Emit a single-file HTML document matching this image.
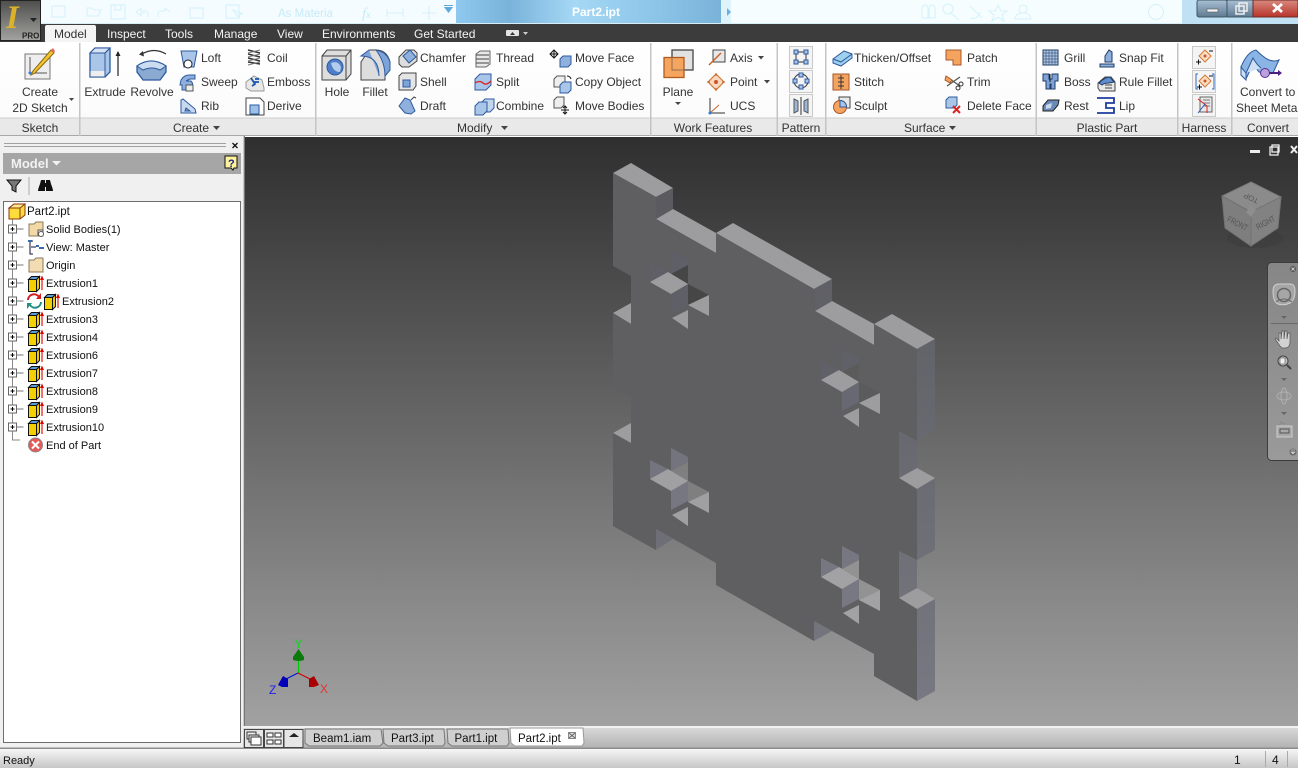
<!DOCTYPE html>
<html><head><meta charset="utf-8"><title>Part2.ipt</title>
<style>
html,body{margin:0;padding:0;background:#fff;overflow:hidden}
svg{display:block}
text{font-family:"Liberation Sans",sans-serif;font-size:12px;fill:#333}
.tab{fill:#f4f4f4}
.mid{text-anchor:middle}
.t{fill:#111}
.tr{fill:#111;font-size:11px}
.dt{fill:#111;font-size:11.5px}
.o{fill:#f4a45f;stroke:#a8562a;stroke-width:1}
.q{fill:none;stroke:#d6f2fb;stroke-width:1.1}
</style></head><body>
<svg width="1298" height="768" viewBox="0 0 1298 768" xmlns="http://www.w3.org/2000/svg">
<defs>
<linearGradient id="bg" gradientUnits="userSpaceOnUse" x1="0" y1="138" x2="0" y2="725"><stop offset="0" stop-color="#2f2f2f"/><stop offset="1" stop-color="#a1a1a1"/></linearGradient>
<linearGradient id="side" gradientUnits="userSpaceOnUse" x1="0" y1="200" x2="0" y2="700"><stop offset="0" stop-color="#5a5a60"/><stop offset="1" stop-color="#787882"/></linearGradient>
<linearGradient id="tb" x1="0" y1="0" x2="1" y2="0"><stop offset="0" stop-color="#8fc9ee"/><stop offset=".2" stop-color="#79b3da"/><stop offset=".45" stop-color="#a5d8f5"/><stop offset=".75" stop-color="#8cc5e8"/><stop offset="1" stop-color="#79b2d8"/></linearGradient>
<linearGradient id="app" x1="0" y1="0" x2="0" y2="1"><stop offset="0" stop-color="#4e4e4c"/><stop offset="1" stop-color="#a3a3a0"/></linearGradient>
<linearGradient id="st" x1="0" y1="0" x2="0" y2="1"><stop offset="0" stop-color="#f6f6f6"/><stop offset="1" stop-color="#c6c6c6"/></linearGradient>
<linearGradient id="tbar" x1="0" y1="0" x2="0" y2="1"><stop offset="0" stop-color="#d8d8d8"/><stop offset="1" stop-color="#b2b2b2"/></linearGradient>
<linearGradient id="rib" x1="0" y1="0" x2="0" y2="1"><stop offset="0" stop-color="#fff"/><stop offset="1" stop-color="#fbfbfb"/></linearGradient>
<linearGradient id="red" x1="0" y1="0" x2="0" y2="1"><stop offset="0" stop-color="#d88a80"/><stop offset="1" stop-color="#b8352a"/></linearGradient>
<linearGradient id="ctl" x1="0" y1="0" x2="0" y2="1"><stop offset="0" stop-color="#a8c0d4"/><stop offset="1" stop-color="#5f7a90"/></linearGradient>
<linearGradient id="nav" x1="0" y1="0" x2="0" y2="1"><stop offset="0" stop-color="#868686"/><stop offset="1" stop-color="#9a9a9a"/></linearGradient>
<g id="ext">
<rect x=".5" y="4.500" width="8" height="12" fill="#f5d000" stroke="#111"/>
<path d="M8.500 4.500L11.500 1.500V13.500L8.500 16.500Z" fill="#f2c800" stroke="#111"/>
<path d="M.5 4.500L3.500 1.500H11.500L8.500 4.500Z" fill="#5d9bd5" stroke="#111"/>
<path d="M14 15V3" stroke="#d00" stroke-width="1.100"/>
<path d="M12 5L14 0.500L16 5Z" fill="#d00"/>
</g>
<g id="pm"><rect x="-4" y="-4" width="8" height="8" fill="#fff" stroke="#666"/><path d="M-2 0H2M0 -2V2" stroke="#000"/><path d="M4 0H11" stroke="#777"/></g>
<path id="drop" d="M0 0H7L3.5 4Z" fill="#444"/>
</defs>

<!-- title bar -->
<rect width="1298" height="24" fill="#f6fdff"/>
<rect x="0" y="0" width="456" height="24" fill="#f4fcff"/>
<rect x="456" y="0" width="265" height="24" fill="url(#tb)"/>
<rect x="721" y="0" width="10" height="24" fill="#def3fc"/>
<rect x="1182" y="0" width="116" height="24" fill="#bfe1f3"/>
<rect x="1197" y="0" width="30" height="17" rx="2" fill="url(#ctl)" stroke="#3f5566"/>
<rect x="1227" y="0" width="26" height="17" fill="url(#ctl)" stroke="#3f5566"/>
<rect x="1253" y="0" width="45" height="17" fill="url(#red)" stroke="#6e2a22"/>
<rect x="1207" y="9" width="11" height="3" fill="#f4f4f4" stroke="#555" stroke-width=".6"/>
<rect x="1236" y="6" width="8" height="8" fill="none" stroke="#eee" stroke-width="1.5"/><rect x="1239" y="3" width="8" height="8" fill="none" stroke="#eee" stroke-width="1.5"/>
<path d="M1273 4l9 8M1282 4l-9 8" stroke="#fff" stroke-width="2.800"/>
<text x="596" y="16" class="mid" style="fill:#fff;font-weight:bold">Part2.ipt</text>
<!-- faint QAT -->
<g class="q">
<rect x="52" y="6" width="13" height="11"/><path d="M87 16V8h5l2 2h7l-3 6z"/><rect x="111" y="5" width="14" height="14"/><rect x="115" y="5" width="6" height="5"/>
<path d="M136 12l5-4v3h5q3 1 2 6M136 12l5 4v-3h4"/><path d="M170 12l-5-4v3h-5q-3 1-2 6"/><rect x="190" y="8" width="13" height="10"/><rect x="226" y="5" width="13" height="13"/><path d="M233 10l6 8 1-4 3 0z"/>
<path d="M387 13h16M387 9v8M403 9v8M422 13h14M429 6v14"/>
<path d="M922 18v-9q0-4 3-4t3 4v9h-6M929 18v-9q0-4 3-4t3 4v9h-6"/><circle cx="948" cy="9" r="5"/><path d="M951 13l8 7"/><path d="M970 6l12 12M970 18q8 2 10-6"/><path d="M998 5l3 6h6l-5 4 2 6-6-4-6 4 2-6-5-4h6z"/><circle cx="1023" cy="9" r="4"/><path d="M1015 19q1-6 8-6t8 6z"/><circle cx="1156" cy="12" r="7.5"/>
</g>
<text x="278" y="17" style="font-size:11.5px;fill:#c6ebf8">As Materia</text>
<text x="362" y="18" style="font-family:'Liberation Serif',serif;font-style:italic;font-size:15px;fill:#c6ebf8">f<tspan style="font-size:10px;fill:#c6ebf8">x</tspan></text>
<path d="M444 7h9l-4.500 6z" fill="#5fa8d8"/><rect x="444" y="5" width="9" height="1" fill="#5fa8d8"/>
<path d="M727 8l4 4-4 4z" fill="#6ab0dc"/>

<!-- tab bar -->
<rect y="24" width="1298" height="18" fill="#3c3c3c"/>
<rect y="23" width="1182" height="1" fill="#d8eef7"/>
<path d="M45 42V27q0-2 2-2H94q2 0 2 2V42Z" fill="#f4f4f4"/>
<text x="54" y="38" style="fill:#333">Model</text>
<text x="107" y="38" class="tab">Inspect</text><text x="165" y="38" class="tab">Tools</text><text x="214" y="38" class="tab">Manage</text><text x="277" y="38" class="tab">View</text><text x="322" y="38" class="tab">Environments</text><text x="414" y="38" class="tab">Get Started</text>
<rect x="506" y="30" width="13" height="6" rx="1" fill="#e4e4e4"/><path d="M510 35l2.500-3 2.500 3z" fill="#333"/><path d="M523 32h5l-2.500 3z" fill="#ccc"/>

<!-- app button -->
<rect x=".5" y=".5" width="40" height="40" fill="url(#app)" stroke="#222"/>
<text x="6" y="28" style="font-family:'Liberation Serif',serif;font-weight:bold;font-style:italic;font-size:33px;fill:#dcb22a">I</text>
<path d="M30 18h7l-3.500 4z" fill="#222"/>
<text x="22" y="38.500" style="font-size:8px;font-weight:bold;fill:#222">PRO</text>

<!-- ribbon -->
<rect y="42" width="1298" height="76" fill="url(#rib)"/>
<rect y="118" width="1298" height="17" fill="#e9e9e9"/>
<rect y="117.500" width="1298" height="1" fill="#cfcfcf"/>
<rect y="135" width="1298" height="1" fill="#a8a8a8"/>
<g fill="#c4c4c4">
<rect x="79" y="43" width="1.500" height="93"/><rect x="315" y="43" width="1.500" height="93"/><rect x="650" y="43" width="1.500" height="93"/><rect x="776.500" y="43" width="1.500" height="93"/><rect x="825" y="43" width="1.500" height="93"/><rect x="1035.500" y="43" width="1.500" height="93"/><rect x="1177" y="43" width="1.500" height="93"/><rect x="1231" y="43" width="1.500" height="93"/>
</g>
<!-- panel titles -->
<text x="40" y="132" class="mid">Sketch</text>
<text x="173" y="132">Create</text><use href="#drop" x="213" y="126"/>
<text x="457" y="132">Modify</text><use href="#drop" x="501" y="126"/>
<text x="713" y="132" class="mid">Work Features</text>
<text x="801" y="132" class="mid">Pattern</text>
<text x="904" y="132">Surface</text><use href="#drop" x="949" y="126"/>
<text x="1107" y="132" class="mid">Plastic Part</text>
<text x="1204" y="132" class="mid">Harness</text>
<text x="1268" y="132" class="mid">Convert</text>

<!-- big labels -->
<text x="40" y="96" class="mid">Create</text><text x="40" y="112" class="mid">2D Sketch</text><path d="M69 98h5l-2.500 3z" fill="#444"/>
<text x="105" y="96" class="mid">Extrude</text><text x="152" y="96" class="mid">Revolve</text>
<text x="337" y="96" class="mid">Hole</text><text x="375" y="96" class="mid">Fillet</text>
<text x="678" y="96" class="mid">Plane</text><path d="M675 102h6l-3 3z" fill="#444"/>
<text x="1240" y="96">Convert to</text><text x="1236" y="112">Sheet Metal</text>
<!-- small labels -->
<text x="201" y="62">Loft</text><text x="201" y="86">Sweep</text><text x="201" y="110">Rib</text>
<text x="267" y="62">Coil</text><text x="267" y="86">Emboss</text><text x="267" y="110">Derive</text>
<text x="420" y="62">Chamfer</text><text x="420" y="86">Shell</text><text x="420" y="110">Draft</text>
<text x="496" y="62">Thread</text><text x="496" y="86">Split</text><text x="496" y="110">Combine</text>
<text x="575" y="62">Move Face</text><text x="575" y="86">Copy Object</text><text x="575" y="110">Move Bodies</text>
<text x="730" y="62">Axis</text><text x="730" y="86">Point</text><text x="730" y="110">UCS</text>
<path d="M758 56h6l-3 3.500z" fill="#444"/><path d="M764 80h6l-3 3.500z" fill="#444"/>
<text x="854" y="62">Thicken/Offset</text><text x="854" y="86">Stitch</text><text x="854" y="110">Sculpt</text>
<text x="967" y="62">Patch</text><text x="967" y="86">Trim</text><text x="967" y="110">Delete Face</text>
<text x="1064" y="62">Grill</text><text x="1064" y="86">Boss</text><text x="1064" y="110">Rest</text>
<text x="1119" y="62">Snap Fit</text><text x="1119" y="86">Rule Fillet</text><text x="1119" y="110">Lip</text>

<!-- big icons -->
<rect x="25" y="54" width="25" height="25" fill="#eee" stroke="#777"/><path d="M30 57V73H47" fill="none" stroke="#555"/><circle cx="30" cy="73" r="1.500" fill="#37d"/>
<path d="M33 71l-2 4 4-2 19-20-3-3z" fill="#f4c430" stroke="#8a6a10"/><path d="M51 50l3 3 1-2-2-3z" fill="#e66"/>
<path d="M90 76V53l5-5h15v24l-5 5H90Z" fill="#a9c5e8" stroke="#2e5a9e" stroke-width="1.300"/><path d="M90 53l5-5h15l-5 5z" fill="#d5e3f4" stroke="#2e5a9e"/><path d="M105 53V77M105 53l5-5" stroke="#2e5a9e" fill="none"/><rect x="90.500" y="71" width="14" height="5.500" fill="#eee"/>
<path d="M118 76V52" stroke="#222" stroke-width="1.200"/><path d="M115.500 56l2.500-5 2.500 5z" fill="#222"/>
<path d="M142 54q12-7 24 0" fill="none" stroke="#333" stroke-width="1.200"/><path d="M143 51l-4 3.500 5 2z" fill="#333"/>
<path d="M137 66q14-10 29 0v6l-6 8h-17l-6-8z" fill="#8aaad2" stroke="#2e5a9e" stroke-width="1.300"/><path d="M137 66q14-10 29 0l-6 4q-8-4-17 0z" fill="#ccdcf0" stroke="#2e5a9e"/>
<path d="M322 56l5-6h24v24l-5 6h-24z" fill="#ddd" stroke="#444"/><path d="M322 56h24v24M346 56l5-6" fill="none" stroke="#444"/><circle cx="335" cy="67" r="8" fill="#4f7fc8" stroke="#2e5a9e"/><path d="M331 63q7-3 10 4l-1 5q-7 0-9-9z" fill="#b4cdec"/>
<path d="M361 62v18h24v-4l5-6V62q-3-12-14-12h-7z" fill="#ddd" stroke="#444"/><path d="M369 50l-8 6q18 0 18 20M376 50q11 2 14 12v8l-5 6q0-14-9-26z" fill="#7ea3d8" stroke="#2e5a9e"/>
<rect x="672" y="50" width="21" height="20" fill="#e2e2e2" stroke="#444" stroke-width="1.300"/>
<rect x="664" y="57.500" width="20" height="20" fill="#f6a55e" stroke="#b05a20" stroke-width="1.300"/><path d="M672 57.500V70H684" fill="none" stroke="#8f6a50"/>
<!-- small icons: create -->
<path d="M181 51h16l-3 16h-10z" fill="#a9c5e8" stroke="#2e5a9e"/><circle cx="188" cy="64" r="4" fill="#fff" stroke="#222"/>
<path d="M181 80q3-5 8-5h6v4h-5l-4 2h5q3 3 0 6l-3 3h-6v-5h-2z" fill="#8fb0dc" stroke="#2e5a9e"/><rect x="186" y="85" width="7" height="6" fill="#eee" stroke="#555"/>
<path d="M181 113V100l2-1 12 10 1 4z" fill="#c8d8ee" stroke="#2e5a9e"/><path d="M186 108l4 3h-5z" fill="#7ea3d8" stroke="#2e5a9e"/>
<g stroke="#333" stroke-width="1.500" fill="none"><path d="M248 50l12 3M248 54l12 3M248 58l12 3M248 62l12 2"/></g><g stroke="#777" fill="none"><path d="M248 53l12-3M248 57l12-3M248 61l12-3M248 65l12-3"/></g>
<path d="M246 82l8-6 8 4 2 8v3h-13l-5-3z" fill="#e8e8e8" stroke="#999"/><path d="M251 78l4 6-3 2M254 82h5M255 79l4 0" stroke="#1a56b0" stroke-width="1.800" fill="none"/>
<path d="M246 98h14l4 4v13h-18z" fill="#fff" stroke="#444"/><rect x="250" y="105" width="9" height="9" fill="#9cc0e8" stroke="#2e5a9e"/>
<!-- modify -->
<path d="M399 57l7-7h8l3 3v8l-8 6h-7l-3-3z" fill="#ddd" stroke="#444"/><path d="M403 56l7-6 6 7-7 6z" fill="#8fb0dc" stroke="#2e5a9e"/>
<rect x="399" y="76" width="14" height="14" fill="#e5e5e5" stroke="#444"/><path d="M399 76l3-3h14v13l-3 4" fill="#e5e5e5" stroke="#444"/><rect x="403" y="80" width="7" height="7" fill="#7ea3d8" stroke="#2e5a9e"/>
<path d="M399 106l6-8 5 2 5 11-4 3-6-1z" fill="#8fb0dc" stroke="#2e5a9e"/><path d="M411 100l3-3 2 1" stroke="#444" fill="none"/>
<path d="M476 54l4-3h10v13l-4 3h-10z" fill="#e8e8e8" stroke="#666"/><path d="M476 55h13M476 59h13M476 63h13" stroke="#444" fill="none"/>
<path d="M475 79l5-5h11v11l-5 5h-11z" fill="#a9c5e8" stroke="#2e5a9e"/><path d="M475 83q5-3 8 0t8-2" stroke="#d22" stroke-width="1.300" fill="none"/>
<path d="M481 103l4-4h9v9l-4 4h-9z" fill="#c3d6ee" stroke="#2e5a9e"/><path d="M475 106l4-4h8v9l-4 4h-8z" fill="#a9c5e8" stroke="#2e5a9e"/>
<path d="M554 50v8M550 54h8" stroke="#111"/><path d="M552 52l2-2 2 2M552 56l2 2 2-2M552 52l-2 2 2 2M556 52l2 2-2 2" fill="none" stroke="#111"/>
<path d="M560 59l3-3h8v8l-3 3h-8z" fill="#8fb0dc" stroke="#2e5a9e"/>
<path d="M554 79l3-3h8v8l-3 3h-8z" fill="#eee" stroke="#555"/><path d="M560 85l3-3h8v8l-3 3h-8z" fill="#a9c5e8" stroke="#2e5a9e"/><path d="M567 76q3 0 4 3" stroke="#111" fill="none"/>
<path d="M554 100l3-3h7v8l-3 3h-7z" fill="#eee" stroke="#555"/><path d="M565 106v8M561 110h8" stroke="#111"/><path d="M563 108l2-2 2 2M563 112l2 2 2-2" fill="none" stroke="#111"/>
<!-- work features -->
<rect x="713" y="50" width="12" height="12" fill="#e8e8e8" stroke="#444"/><path d="M709 65l12-12" stroke="#c8632a" stroke-width="1.500"/>
<path d="M716 74l8 8-8 8-8-8z" fill="#f9d9bd" stroke="#d07a3a" stroke-width="1.200"/><circle cx="716" cy="82" r="2" fill="#c8562a"/><path d="M707 82h3M722 82h3M716 73v3M716 88v3" stroke="#c8632a"/>
<path d="M710 98v15h15" fill="none" stroke="#333"/><path d="M710 113l9-8" stroke="#c8632a"/><circle cx="710" cy="113" r="1.500" fill="#37d"/>
<!-- pattern buttons -->
<g fill="#f4f4f4" stroke="#c9c9c9"><rect x="789.500" y="46.500" width="23" height="22"/><rect x="789.500" y="70.500" width="23" height="22"/><rect x="789.500" y="94.500" width="23" height="22"/>
<rect x="1192.500" y="46.500" width="23" height="22"/><rect x="1192.500" y="70.500" width="23" height="22"/><rect x="1192.500" y="94.500" width="23" height="22"/></g>
<path d="M797 52h8M797 62h8M796 53v9M806 53v9" stroke="#333" fill="none"/><g fill="#a9c5e8" stroke="#2e5a9e"><rect x="794" y="50" width="4" height="4"/><rect x="804" y="50" width="4" height="4"/><rect x="794" y="60" width="4" height="4"/><rect x="804" y="60" width="4" height="4"/></g>
<circle cx="801" cy="81" r="7" fill="none" stroke="#333"/><g fill="#a9c5e8" stroke="#2e5a9e"><rect x="799" y="73" width="4" height="4"/><rect x="799" y="85" width="4" height="4"/><rect x="793" y="79" width="4" height="4"/><rect x="805" y="79" width="4" height="4"/></g>
<path d="M794 99l4 2v10l-4 2zM808 99l-4 2v10l4 2z" fill="#9cb6d8" stroke="#555"/><path d="M801 97v18" stroke="#333"/>
<!-- surface -->
<path d="M833 59l11-8 8 3v4l-11 8-8-3z" fill="#9fd0ee" stroke="#2e5a9e"/><path d="M833 59l8 3 11-8" fill="none" stroke="#2e5a9e"/>
<rect x="833" y="74" width="16" height="16" fill="#f4a45f" stroke="#a8562a"/><path d="M841 75v14M838 78h6M838 82h6M838 86h6" stroke="#333" fill="none"/>
<rect x="839" y="97" width="11" height="11" fill="#e8e8e8" stroke="#444"/><circle cx="840" cy="107" r="6.500" fill="#f4a45f" stroke="#a8562a"/><path d="M840 100.500v6.500h6.500a6.500 6.500 0 0 0-6.500-6.500z" fill="#a9c5e8" stroke="#2e5a9e"/>
<path d="M946 50h15v15h-8v-5h-7z" class="o"/>
<path d="M947 77l13 9M960 77l-13 9" stroke="#555" stroke-width="1.300"/><path d="M946 76l6 4-2 3-5-3z" fill="#f4a45f" stroke="#a8562a"/><circle cx="958" cy="88" r="2" fill="none" stroke="#333"/><circle cx="961" cy="84" r="2" fill="none" stroke="#333"/>
<path d="M946 100l3-3h8v8l-3 3h-8z" fill="#a9c5e8" stroke="#2e5a9e"/><path d="M953 106l7 7M960 106l-7 7" stroke="#d22" stroke-width="2"/>
<!-- plastic part -->
<rect x="1043" y="50" width="15" height="15" fill="#b8c8dc" stroke="#1f3c66"/><path d="M1046 50v15M1049 50v15M1052 50v15M1055 50v15M1043 53h15M1043 56h15M1043 59h15M1043 62h15" stroke="#355a8c" stroke-width=".7"/>
<path d="M1043 74h6v5h3v-5h6v7h-3v8h-4v-5h-1v5h-4v-8h-3z" fill="#7ea3d8" stroke="#1f3c66"/><path d="M1050 74v8" stroke="#111"/>
<path d="M1043 106l5-6h11l-1 5-5 6h-10z" fill="#6a8ab8" stroke="#222"/><path d="M1046 105l6-2-1 5-5 1z" fill="#c8d8ee"/>
<path d="M1100 64h14v3h-14zM1105 62v-6l4-6 3 2v10z" fill="#8fb0dc" stroke="#1f3c66"/>
<path d="M1098 83l7-6h6l4 5v9h-15l-2-3z" fill="#e8e8e8" stroke="#444"/><path d="M1099 83q6-6 11-6l4 5-5 1q-5 0-7 2z" fill="#5f8fd0" stroke="#1f3c66"/><path d="M1105 85h7M1105 88h7" stroke="#444"/>
<path d="M1097 98h17v5h-8v5h8v5h-17" fill="none" stroke="#1f3c9e" stroke-width="1.800"/>
<!-- harness -->
<path d="M1205 50l6 6-6 6-6-6z" fill="#fbdcc0" stroke="#d07a3a"/><circle cx="1205" cy="56" r="1.500" fill="#c8562a"/><path d="M1196 62h5M1198.500 59.500v5M1209 51h4" stroke="#111"/>
<path d="M1205 75l6 6-6 6-6-6z" fill="#fbdcc0" stroke="#d07a3a"/><circle cx="1205" cy="81" r="1.500" fill="#c8562a"/><path d="M1197 87h5M1199.500 84.500v5M1209 76h4" stroke="#111"/><path d="M1198 74h-2v15h2M1212 74h2v15h-2" fill="none" stroke="#2e6ac0"/>
<rect x="1200" y="97" width="12" height="15" fill="#e8e8e8" stroke="#666"/><path d="M1203 100h7M1203 103h7M1203 106h7" stroke="#777"/><path d="M1198 99l9 7v7" stroke="#d22" fill="none"/><path d="M1198 113l7-9" stroke="#2e5ab0" fill="none"/>
<!-- convert -->
<path d="M1241 67q6-15 15-17 8 8 13 10 6 2 10 0l-6 13-14-1-6-8-7 15-5-6z" fill="#8ab4e4" stroke="#2e5a9e"/><path d="M1241 67l5 6v7l-5-5zM1246 73l7-15q4 7 8 10" fill="#cfe0f4" stroke="#2e5a9e"/>
<circle cx="1265" cy="73" r="4.500" fill="#b9a2dc" stroke="#5a2d91"/><path d="M1269 73h10" stroke="#4a2080" stroke-width="2"/><path d="M1278 70l4 3-4 3z" fill="#4a2080"/>

<!-- left panel -->
<rect x="0" y="136" width="245" height="612" fill="#f0f0f0"/>
<rect x="4" y="143" width="222" height="1" fill="#a0a0a0"/><rect x="4" y="146" width="222" height="1" fill="#a0a0a0"/>
<path d="M232.500 143l5 5M237.500 143l-5 5" stroke="#111" stroke-width="1.300"/>
<rect x="3" y="153" width="238" height="21" fill="#a6a6a6"/>
<text x="11" y="168" style="font-size:13px;font-weight:bold;fill:#f2f2f2">Model</text>
<path d="M52 161h9l-4.500 4.500z" fill="#f2f2f2"/>
<path d="M225 156h12v12l-3 0-1 2-2-2h-6z" fill="#fbf29b" stroke="#111"/><text x="228" y="167" style="font-size:11px;font-weight:bold;fill:#1a1a8a">?</text>
<path d="M7 180h14l-5 6v6l-4-2v-4z" fill="#777" stroke="#111"/>
<rect x="28.500" y="177" width="1" height="18" fill="#aaa"/>
<path d="M38 191q0-2 2-7l1-4h4v11zM46 180h4l1 4q2 5 2 7h-7z" fill="#111"/><rect x="43" y="183" width="5" height="4" fill="#111"/>
<rect x="3.500" y="201.500" width="237" height="541" fill="#fff" stroke="#6e6e6e"/>
<path d="M12.500 219V440H20" fill="none" stroke="#888"/>
<!-- part icon -->
<path d="M9 208l5-4h11v11l-5 4H9z" fill="#fbdc3a" stroke="#8a3a10"/><path d="M9 208l5-4h11l-5 4zM20 208v11" fill="#ffe98c" stroke="#8a3a10"/>
<g transform="translate(12.500 229)"><use href="#pm"/></g><g transform="translate(12.500 247)"><use href="#pm"/></g><g transform="translate(12.500 265)"><use href="#pm"/></g>
<g transform="translate(12.500 283)"><use href="#pm"/></g><g transform="translate(12.500 301)"><use href="#pm"/></g><g transform="translate(12.500 319)"><use href="#pm"/></g>
<g transform="translate(12.500 337)"><use href="#pm"/></g><g transform="translate(12.500 355)"><use href="#pm"/></g><g transform="translate(12.500 373)"><use href="#pm"/></g>
<g transform="translate(12.500 391)"><use href="#pm"/></g><g transform="translate(12.500 409)"><use href="#pm"/></g><g transform="translate(12.500 427)"><use href="#pm"/></g>
<path d="M29 224h5l2-2h7v14H29z" fill="#f3d8a8" stroke="#8a7a5a"/><rect x="38" y="230" width="5" height="5" fill="#fff" stroke="#555"/><circle cx="41" cy="234" r="2.500" fill="#fff" stroke="#555"/>
<path d="M33 241h-3v13h3M31 247h5" fill="none" stroke="#113"/><rect x="28" y="240" width="4" height="2" fill="#3a6ab0"/><rect x="36" y="245" width="3" height="2" fill="#3a6ab0"/><rect x="39" y="247" width="5" height="2" fill="#3a6ab0"/>
<path d="M29 260h5l2-2h7v14H29z" fill="#f3dcb2" stroke="#8a7a5a"/>
<use href="#ext" x="28" y="275"/><use href="#ext" x="44" y="293"/><use href="#ext" x="28" y="311"/><use href="#ext" x="28" y="329"/><use href="#ext" x="28" y="347"/><use href="#ext" x="28" y="365"/><use href="#ext" x="28" y="383"/><use href="#ext" x="28" y="401"/><use href="#ext" x="28" y="419"/>
<path d="M28 300a6 6 0 0 1 11-3" fill="none" stroke="#d02020" stroke-width="2"/><path d="M41 293v6h-5z" fill="#d02020"/><path d="M41 302a6 6 0 0 1-11 3" fill="none" stroke="#209080" stroke-width="2"/><path d="M27 309v-6h5z" fill="#209080"/>
<circle cx="35.500" cy="445" r="7" fill="#e85858" stroke="#888"/><path d="M32 441.500l7 7M39 441.500l-7 7" stroke="#fff" stroke-width="2"/>
<text x="27" y="215" class="tr" style="font-size:11.5px">Part2.ipt</text><text x="46" y="233" class="tr">Solid Bodies(1)</text><text x="46" y="251" class="tr">View: Master</text><text x="46" y="269" class="tr">Origin</text>
<text x="46" y="287" class="tr">Extrusion1</text><text x="62" y="305" class="tr">Extrusion2</text><text x="46" y="323" class="tr">Extrusion3</text><text x="46" y="341" class="tr">Extrusion4</text><text x="46" y="359" class="tr">Extrusion6</text><text x="46" y="377" class="tr">Extrusion7</text><text x="46" y="395" class="tr">Extrusion8</text><text x="46" y="413" class="tr">Extrusion9</text><text x="46" y="431" class="tr">Extrusion10</text><text x="46" y="449" class="tr">End of Part</text>

<!-- viewport -->
<rect x="245" y="137" width="1053" height="589" fill="url(#bg)"/>
<rect x="243" y="136" width="2" height="592" fill="#c8c8c8"/>
<rect x="244" y="136" width="1" height="590" fill="#777"/>
<!-- model tops -->
<g fill="#9d9da0">
<polygon points="613,173 631,163 673,188 656,197"/>
<polygon points="656,219 673,209 716,233 716,253"/>
<polygon points="716,233 733,223 832,279 814,289"/>
<polygon points="815,311 832,301 874,324 874,345"/>
<polygon points="874,324 892,314 935,339 917,349"/>
<polygon points="899,478 917,468 935,478 917,489"/>
<polygon points="899,598 917,588 935,599 917,609"/>
<polygon points="613,313 631,303 631,324"/>
<polygon points="613,433 631,423 631,443"/>
</g>
<g fill="url(#side)">
<polygon points="656,197 673,188 673,209 656,219"/>
<polygon points="814,289 832,279 832,301 815,311"/>
<polygon points="917,349 935,339 935,431 917,441"/>
<polygon points="899,431 917,441 917,468 899,478"/>
<polygon points="917,489 935,479 935,550 917,560"/>
<polygon points="899,551 917,560 917,588 899,598"/>
<polygon points="917,609 935,599 935,691 917,701"/>
<polygon points="656,529 673,539 656,550"/>
<polygon points="814,621 832,631 814,641"/>
</g>
<polygon fill="#5f5f61" points="613,173 656,197 656,219 716,253 716,233 814,289 815,311 874,345 874,324 917,349 917,441 899,431 899,478 917,489 917,560 899,551 899,598 917,609 917,701 874,676 874,654 832,631 814,621 814,641 716,585 716,563 656,529 656,550 613,526 613,433 631,443 631,396 613,386 613,313 631,324 631,276 613,266"/>
<!-- holes -->
<g><polygon fill="#5f5f68" points="650,263 668,272 650,282"/><polygon fill="#5f5f68" points="671,251 688,260 688,265 671,274"/><polygon fill="#464646" points="671,274 688,265 688,284 668,272"/><polygon fill="#464646" points="688,284 709,295 688,305"/><polygon fill="#5f5f68" points="671,294 688,284 688,304 671,313"/><polygon fill="#9d9da0" points="650,282 668,272 688,284 671,294"/><polygon fill="#9d9da0" points="672,318 688,310 688,329"/><polygon fill="#9d9da0" points="688,305 709,295 709,316"/></g>
<g transform="translate(171 98)"><polygon fill="#606068" points="650,263 668,272 650,282"/><polygon fill="#606068" points="671,251 688,260 688,265 671,274"/><polygon fill="#5b5b5b" points="671,274 688,265 688,284 668,272"/><polygon fill="#5b5b5b" points="688,284 709,295 688,305"/><polygon fill="#686872" points="671,294 688,284 688,304 671,313"/><polygon fill="#9d9da0" points="650,282 668,272 688,284 671,294"/><polygon fill="#9d9da0" points="672,318 688,310 688,329"/><polygon fill="#9d9da0" points="688,305 709,295 709,316"/></g>
<g transform="translate(0 197)"><polygon fill="#74747e" points="650,263 668,272 650,282"/><polygon fill="#74747e" points="671,251 688,260 688,265 671,274"/><polygon fill="#7f7f7f" points="671,274 688,265 688,284 668,272"/><polygon fill="#7f7f7f" points="688,284 709,295 688,305"/><polygon fill="#777781" points="671,294 688,284 688,304 671,313"/><polygon fill="#a0a0a3" points="650,282 668,272 688,284 671,294"/><polygon fill="#a0a0a3" points="672,318 688,310 688,329"/><polygon fill="#a0a0a3" points="688,305 709,295 709,316"/></g>
<g transform="translate(171 295)"><polygon fill="#777781" points="650,263 668,272 650,282"/><polygon fill="#777781" points="671,251 688,260 688,265 671,274"/><polygon fill="#929292" points="671,274 688,265 688,284 668,272"/><polygon fill="#929292" points="688,284 709,295 688,305"/><polygon fill="#787882" points="671,294 688,284 688,304 671,313"/><polygon fill="#a2a2a5" points="650,282 668,272 688,284 671,294"/><polygon fill="#a2a2a5" points="672,318 688,310 688,329"/><polygon fill="#a2a2a5" points="688,305 709,295 709,316"/></g>

<!-- triad -->
<path d="M298.500 673V658" stroke="#0c0" stroke-width="1.200"/><path d="M293 660v-3l5.500-8 5.500 8v3q-5.500 2-11 0z" fill="#0a7a0a"/>
<path d="M298 673l-12 6" stroke="#0010e0"/><path d="M278 685l5-9 5 3v8h-6z" fill="#0000b8"/>
<path d="M298 673l12 6" stroke="#d00000"/><path d="M309 687v-8l5-3 5 9-5 2z" fill="#a80000"/>
<text x="294.500" y="648" style="font-size:12px;fill:#10d020">Y</text><text x="269" y="694" style="font-size:12px;fill:#2020e8">Z</text><text x="320" y="693" style="font-size:12px;fill:#e83030">X</text>

<!-- window ctrl -->
<rect x="1250" y="150" width="10" height="3" fill="#eee"/>
<rect x="1270" y="147" width="8" height="8" fill="none" stroke="#eee" stroke-width="1.300"/><rect x="1272" y="145" width="7" height="7" fill="none" stroke="#eee" stroke-width="1.300"/>
<path d="M1291 146l6 7M1297 146l-6 7" stroke="#eee" stroke-width="2"/>

<!-- view cube -->
<ellipse cx="1255" cy="238" rx="28" ry="10" fill="#2a2a2a" opacity=".15"/>
<polygon points="1251,182 1281,197 1251,212 1222,196" fill="#8b8b8b" stroke="#7a7a7a"/>
<polygon points="1222,196 1251,212 1251,246 1225,228" fill="#7e7e7e" stroke="#737373"/>
<polygon points="1281,197 1251,212 1251,246 1278,228" fill="#828282" stroke="#737373"/>
<polygon points="1251,206 1256,210 1251,217 1246,212" fill="#8e8e8e"/>
<text transform="translate(1226.500 221) rotate(27) scale(.75 1)" style="font-size:8.500px;fill:#555">FRONT</text>
<text transform="translate(1258 230) rotate(-28) scale(.77 1)" style="font-size:8.500px;fill:#555">RIGHT</text>
<text transform="translate(1259 199) rotate(205)" style="font-size:7.500px;fill:#555">TOP</text>

<!-- nav bar -->
<rect x="1267.500" y="262.500" width="40" height="198" rx="4" fill="url(#nav)" stroke="#3c3c3c"/>
<circle cx="1293" cy="269" r="3" fill="#555"/><path d="M1291.500 267.500l3 3M1294.500 267.500l-3 3" stroke="#ccc"/>
<path d="M1273 291q0-7 6-7h11q5 0 5 7 0 9-5 12-6 3-12 1-5-2-5-13z" fill="#a6a6a6" stroke="#d0d0d0"/><circle cx="1284" cy="295" r="6.500" fill="none" stroke="#666" stroke-width="1.500"/><path d="M1276 302q8-6 16 0" fill="none" stroke="#666"/>
<path d="M1281 316h6l-3 3z" fill="#666"/><rect x="1271" y="323" width="27" height="1" fill="#6a6a6a"/>
<path d="M1280 346l-5-7 1-1 3 3v-8h2v6l1-8h2v8l1-8h2v8l1-6h2v9q0 5-4 6h-4z" fill="#d2d2d2" stroke="#555" stroke-width=".7"/>
<circle cx="1283" cy="361" r="5" fill="#c0c0c0" stroke="#444"/><rect x="1280" y="358" width="5" height="6" fill="#eee" stroke="#555" stroke-width=".6"/><path d="M1287 365l4 4" stroke="#444" stroke-width="2"/>
<path d="M1281 378h6l-3 3z" fill="#666"/>
<ellipse cx="1284" cy="396" rx="7" ry="4" fill="none" stroke="#b0b0b0"/><ellipse cx="1284" cy="396" rx="3" ry="8" fill="none" stroke="#b0b0b0"/>
<path d="M1281 412h6l-3 3z" fill="#666"/>
<rect x="1277" y="426" width="15" height="11" fill="#a8a8a8" stroke="#ccc"/><rect x="1280" y="429" width="9" height="4" fill="none" stroke="#555"/><path d="M1279 425l2-3 4 2" stroke="#888" fill="none"/>
<circle cx="1293" cy="452" r="3.500" fill="#666"/><path d="M1291 450h4M1291 452h4l-2 2z" stroke="#ccc" stroke-width=".7" fill="#ccc"/>

<!-- doc tabs -->
<rect x="243" y="726" width="1055" height="2" fill="#f2f2f2"/>
<rect x="243" y="728" width="1055" height="20" fill="url(#tbar)"/>
<rect y="747.500" width="1298" height="1.500" fill="#8c8c8c"/>
<rect y="749" width="1298" height="19" fill="url(#st)"/>
<g fill="#e6e6e6" stroke="#444"><rect x="244.500" y="729.500" width="19" height="18"/><rect x="264.500" y="729.500" width="19" height="18"/><rect x="284" y="729.500" width="19" height="18"/></g>
<g fill="#eee" stroke="#333"><rect x="247" y="732" width="9" height="7"/><rect x="249" y="735" width="10" height="7"/><rect x="251" y="737" width="10" height="8" fill="#fff"/></g>
<g fill="#fff" stroke="#333"><rect x="267" y="733" width="6" height="4"/><rect x="275" y="733" width="6" height="4"/><rect x="267" y="740" width="6" height="4"/><rect x="275" y="740" width="6" height="4"/></g>
<path d="M289 737l5-4 5 4z" fill="#222"/>
<path d="M305 729H381l2 14-3 3H309l-4-3z" fill="#cfcfcf" stroke="#777"/>
<path d="M383 729H444l1 14-2 3H388l-4-3z" fill="#cfcfcf" stroke="#777"/>
<path d="M447 729H508l1 14-2 3H452l-4-3z" fill="#cfcfcf" stroke="#777"/>
<path d="M510 728H583l1 15-2 3H515l-4-3z" fill="#fff" stroke="#999"/>
<text x="313" y="742" class="dt">Beam1.iam</text><text x="391" y="742" class="dt">Part3.ipt</text><text x="454.500" y="742" class="dt">Part1.ipt</text><text x="518" y="742" class="dt">Part2.ipt</text>
<rect x="568.500" y="732.500" width="7" height="6" fill="#ddd" stroke="#888"/><path d="M569 733l6 5M575 733l-6 5" stroke="#666"/>

<!-- status -->
<text x="3" y="764" class="tr">Ready</text>
<text x="1234" y="764" class="t">1</text><text x="1272" y="764" class="t">4</text>
<rect x="1265" y="751" width="1" height="16" fill="#aaa"/><rect x="1287" y="751" width="1" height="16" fill="#aaa"/>
</svg>
</body></html>
